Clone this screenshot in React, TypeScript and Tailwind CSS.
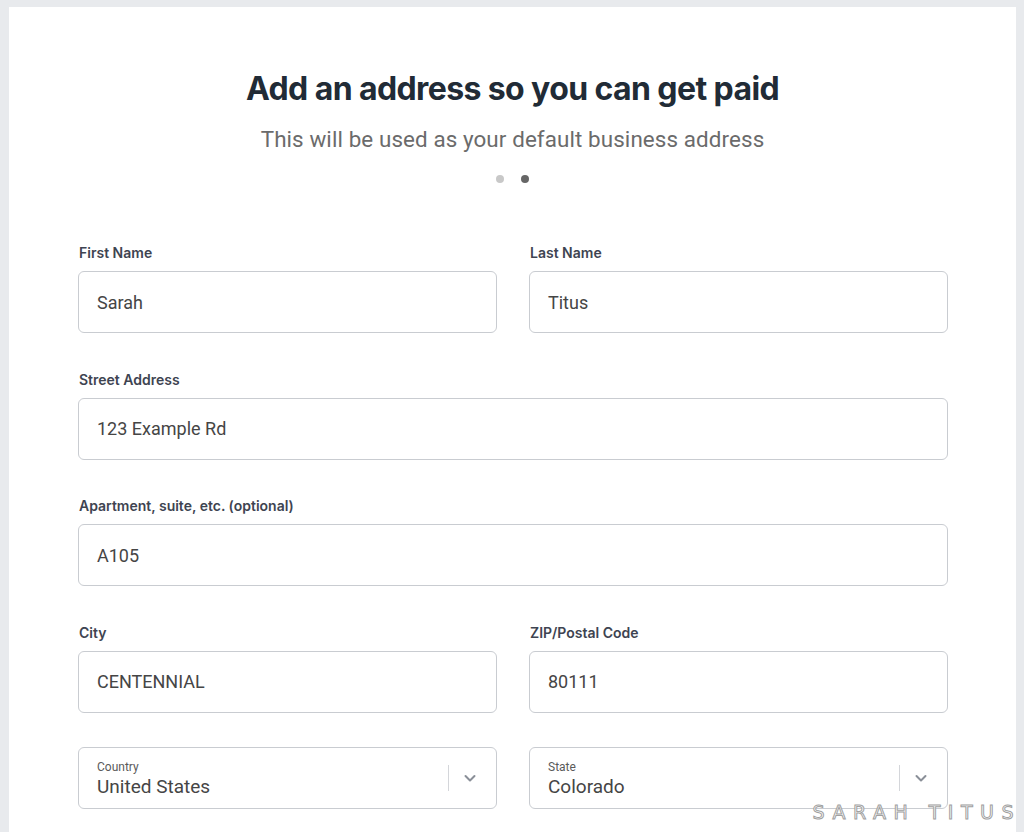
import React from "react";

function Field({ label, value }: { label: string; value: string }) {
  return (
    <div className="flex flex-col">
      <div className="h-[28px] text-[14px] font-semibold text-[#3e4451] leading-[20px] [font-family:Inter,'Noto_Sans',sans-serif] pl-px">
        {label}
      </div>
      <div className="h-[62px] rounded-[6px] border border-[#c9ccd1] bg-white flex items-center px-[18px] text-[18px] text-[#454545] [font-family:Roboto,sans-serif]">
        {value}
      </div>
    </div>
  );
}

function SelectField({ label, value }: { label: string; value: string }) {
  return (
    <div className="h-[62px] rounded-[6px] border border-[#c9ccd1] bg-white flex items-center pl-[18px] pr-[19px] [font-family:Roboto,sans-serif]">
      <div className="flex-1 flex flex-col pt-[4px]">
        <span className="text-[12px] leading-[14px] text-[#5a5a5a]">{label}</span>
        <span className="text-[19px] leading-[25px] text-[#454545]">{value}</span>
      </div>
      <div className="w-px h-[26px] bg-[#d4d6da] mr-[14px]" />
      <svg width="14" height="14" viewBox="0 0 14 14" className="text-[#8a8f98]">
        <path d="M2.5 5 L7 9.5 L11.5 5" fill="none" stroke="currentColor" strokeWidth="2" strokeLinecap="round" strokeLinejoin="round" />
      </svg>
    </div>
  );
}

export default function App() {
  return (
    <div className="w-[1024px] h-[832px] bg-[#e8eaed] pt-[7px] pl-[9px] pr-[8px] overflow-hidden relative">
      <div className="bg-white h-full flex flex-col items-center">
        <h1 className="mt-[62px] text-[32px] leading-[40px] font-bold text-[#212b36] tracking-[-0.6px] [font-family:Inter,sans-serif]">
          Add an address so you can get paid
        </h1>
        <p className="mt-[16px] text-[22.4px] leading-[28px] text-[#6b6b6b] [font-family:Roboto,sans-serif] tracking-[0.1px]">
          This will be used as your default business address
        </p>
        <div className="mt-[22px] flex gap-[17px]">
          <span className="w-[8px] h-[8px] rounded-full bg-[#c8c8c8]" />
          <span className="w-[8px] h-[8px] rounded-full bg-[#666666]" />
        </div>
        <div className="mt-[60px] w-[870px] self-start ml-[69px] grid grid-cols-2 gap-x-[32px] gap-y-[36.5px]">
          <Field label="First Name" value="Sarah" />
          <Field label="Last Name" value="Titus" />
          <div className="col-span-2">
            <Field label="Street Address" value="123 Example Rd" />
          </div>
          <div className="col-span-2">
            <Field label="Apartment, suite, etc. (optional)" value="A105" />
          </div>
          <Field label="City" value="CENTENNIAL" />
          <Field label="ZIP/Postal Code" value="80111" />
        </div>
        <div className="mt-[34px] w-[870px] self-start ml-[69px] grid grid-cols-2 gap-x-[32px]">
          <SelectField label="Country" value="United States" />
          <SelectField label="State" value="Colorado" />
        </div>
      </div>
      <div className="absolute right-[3px] top-[798px] text-[19px] tracking-[7.5px] text-white [-webkit-text-stroke:1px_#a0a0a0] [font-family:'DejaVu_Sans',sans-serif]">
        SARAH TITUS
      </div>
    </div>
  );
}
